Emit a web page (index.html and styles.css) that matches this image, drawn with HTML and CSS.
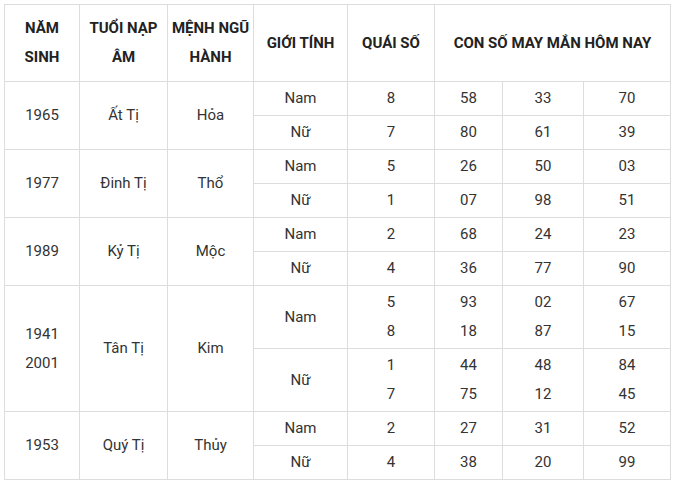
FILE: index.html
```
<!DOCTYPE html>
<html lang="vi">
<head>
<meta charset="utf-8">
<link rel="stylesheet" href="styles.css">
</head>
<body>
<div class="tbl">
  <div class="c h r-head">NĂM SINH</div>
  <div class="c h r-head">TUỔI NẠP ÂM</div>
  <div class="c h r-head">MỆNH NGŨ HÀNH</div>
  <div class="c h r-head">GIỚI TÍNH</div>
  <div class="c h r-head">QUÁI SỐ</div>
  <div class="c h r-head span3c">CON SỐ MAY MẮN HÔM NAY</div>

  <div class="c span2r">1965</div>
  <div class="c span2r">Ất Tị</div>
  <div class="c span2r">Hỏa</div>
  <div class="c">Nam</div><div class="c">8</div><div class="c">58</div><div class="c">33</div><div class="c">70</div>
  <div class="c">Nữ</div><div class="c">7</div><div class="c">80</div><div class="c">61</div><div class="c">39</div>

  <div class="c span2r">1977</div>
  <div class="c span2r">Đinh Tị</div>
  <div class="c span2r">Thổ</div>
  <div class="c">Nam</div><div class="c">5</div><div class="c">26</div><div class="c">50</div><div class="c">03</div>
  <div class="c">Nữ</div><div class="c">1</div><div class="c">07</div><div class="c">98</div><div class="c">51</div>

  <div class="c span2r">1989</div>
  <div class="c span2r">Kỷ Tị</div>
  <div class="c span2r">Mộc</div>
  <div class="c">Nam</div><div class="c">2</div><div class="c">68</div><div class="c">24</div><div class="c">23</div>
  <div class="c">Nữ</div><div class="c">4</div><div class="c">36</div><div class="c">77</div><div class="c">90</div>

  <div class="c span2r">1941<br>2001</div>
  <div class="c span2r">Tân Tị</div>
  <div class="c span2r">Kim</div>
  <div class="c">Nam</div><div class="c">5<br>8</div><div class="c">93<br>18</div><div class="c">02<br>87</div><div class="c">67<br>15</div>
  <div class="c">Nữ</div><div class="c">1<br>7</div><div class="c">44<br>75</div><div class="c">48<br>12</div><div class="c">84<br>45</div>

  <div class="c span2r">1953</div>
  <div class="c span2r">Quý Tị</div>
  <div class="c span2r">Thủy</div>
  <div class="c">Nam</div><div class="c">2</div><div class="c">27</div><div class="c">31</div><div class="c">52</div>
  <div class="c">Nữ</div><div class="c">4</div><div class="c">38</div><div class="c">20</div><div class="c">99</div>
</div>
</body>
</html>
```
FILE: styles.css
```
html, body {
  margin: 0;
  padding: 0;
  background: #fff;
}
body {
  padding: 4px;
  font-family: Roboto, "Liberation Sans", Arial, sans-serif;
  font-size: 15px;
  color: #333;
}
.tbl {
  display: grid;
  width: 667px;
  box-sizing: border-box;
  grid-template-columns: 74px 87px 85px 93px 86px 67px 80px 86px;
  grid-template-rows: 76px 33px 33px 33px 33px 33px 33px 62px 62px 33px 33px;
  gap: 1px;
  padding: 1px;
  background: #dddddd;
}
.c {
  background: #fff;
  display: flex;
  align-items: center;
  justify-content: center;
  text-align: center;
  line-height: 29px;
  padding: 0 3px;
}
.h {
  font-weight: 700;
  color: #222;
}
.span2r {
  grid-row: span 2;
}
.span3c {
  grid-column: span 3;
}
```
